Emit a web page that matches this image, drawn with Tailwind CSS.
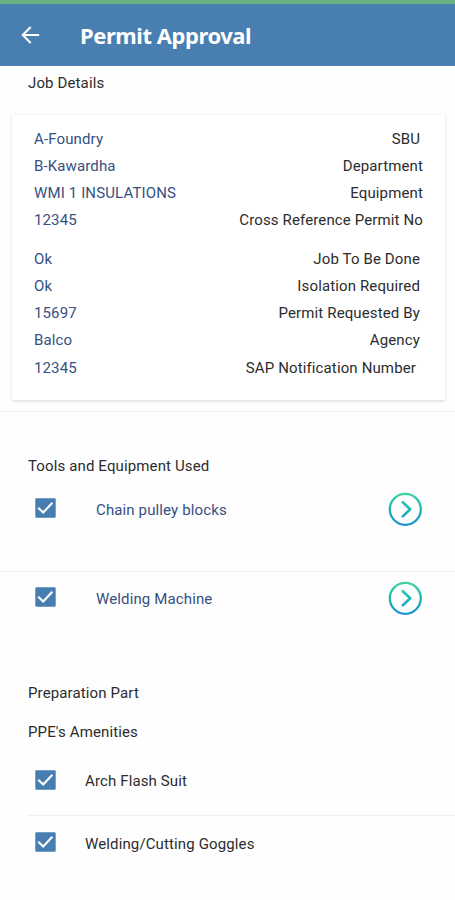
<!DOCTYPE html>
<html lang="en">
<head>
    <meta charset="UTF-8">
    <meta name="viewport" content="width=device-width, initial-scale=1.0">
    <title>Permit Approval</title>
    <script src="https://cdn.jsdelivr.net/npm/@tailwindcss/browser@4"></script>
</head>
<body class="bg-[#fefefe] font-['Roboto',sans-serif] text-[15px] leading-[27.25px] tracking-[0.13px] text-[#2c2c2e]">
    <!-- shared icons, zero-sized so the gradient still resolves -->
    <svg class="block h-0 w-0">
        <defs>
            <linearGradient id="ring" gradientUnits="userSpaceOnUse" x1="17" y1="0" x2="17" y2="34">
                <stop offset="0" stop-color="#3fd69c"/>
                <stop offset="0.5" stop-color="#20b8b4"/>
                <stop offset="1" stop-color="#1a8fd0"/>
            </linearGradient>
            <symbol id="check" viewBox="0 0 21 20">
                <rect x="0.3" y="0.3" width="20.4" height="19.4" rx="1.2" fill="#477eb1"/>
                <path d="M3.2 9.8 L8.2 14.5 L17.4 4.8" fill="none" stroke="#fff" stroke-width="2.1"/>
            </symbol>
            <symbol id="next" viewBox="0 0 34 34">
                <circle cx="17.3" cy="17.3" r="15.5" fill="none" stroke="url(#ring)" stroke-width="2.3"/>
                <path d="M14.8 10.2 L22.2 17.3 L14.8 24.4" fill="none" stroke="url(#ring)" stroke-width="2.6" stroke-linecap="round" stroke-linejoin="round"/>
            </symbol>
        </defs>
    </svg>

    <div class="h-1 bg-[#69b183]"></div>
    <header class="flex h-[62px] items-center bg-[#497eb1] pl-[21px] text-white">
        <svg class="h-[18px] w-[19px]" viewBox="0 0 19 18" fill="none" stroke="currentColor" stroke-width="2">
            <path d="M18.2 9 H2 M9.7 1 L1.7 9 L9.7 17"/>
        </svg>
        <h1 class="ml-10 pt-[1px] font-['Noto_Sans',sans-serif] text-[22px] font-bold tracking-[-0.45px]">Permit Approval</h1>
    </header>

    <main>
        <h2 class="h-[49px] pt-1 pl-7">Job Details</h2>

        <section class="mr-[10px] ml-3 h-[285px] bg-white pt-[10.5px] pr-[22px] pl-[22px] shadow-[0_1px_3px_rgba(0,0,0,0.16)]">
            <div class="flex justify-between"><span class="text-[#36507f]">A-Foundry</span><span class="pr-[3px]">SBU</span></div>
            <div class="flex justify-between"><span class="text-[#36507f]">B-Kawardha</span><span>Department</span></div>
            <div class="flex justify-between"><span class="text-[#36507f]">WMI 1 INSULATIONS</span><span>Equipment</span></div>
            <div class="flex justify-between"><span class="text-[#36507f]">12345</span><span>Cross Reference Permit No</span></div>
            <div class="mt-[11px] flex justify-between"><span class="text-[#36507f]">Ok</span><span class="pr-[3px]">Job To Be Done</span></div>
            <div class="flex justify-between"><span class="text-[#36507f]">Ok</span><span class="pr-[3px]">Isolation Required</span></div>
            <div class="flex justify-between"><span class="text-[#36507f]">15697</span><span class="pr-[3px]">Permit Requested By</span></div>
            <div class="flex justify-between"><span class="text-[#36507f]">Balco</span><span class="pr-[3px]">Agency</span></div>
            <div class="flex justify-between"><span class="text-[#36507f]">12345</span><span class="pr-[7px]">SAP Notification Number</span></div>
        </section>

        <section class="mt-[11px] border-t border-[#f2f2f2] text-[#36507f]">
            <h2 class="pt-[41px] pl-7 text-[#2c2c2e]">Tools and Equipment Used</h2>
            <div class="flex h-[91px] items-start pt-[12px] pr-[33px] pl-[35px]">
                <svg class="mt-[6px] h-5 w-[21px]"><use href="#check"/></svg>
                <span class="mt-[5px] ml-10 flex-1">Chain pulley blocks</span>
                <svg class="h-[34px] w-[34px]"><use href="#next"/></svg>
            </div>
            <div class="flex h-[109px] items-start border-t border-[#f2f2f2] pt-[9px] pr-[33px] pl-[35px]">
                <svg class="mt-[6px] h-5 w-[21px]"><use href="#check"/></svg>
                <span class="mt-[5px] ml-10 flex-1">Welding Machine</span>
                <svg class="h-[34px] w-[34px]"><use href="#next"/></svg>
            </div>
        </section>

        <section class="pl-7">
            <h2>Preparation Part</h2>
            <h2 class="mt-[11px]">PPE's Amenities</h2>
            <div class="flex h-[69px] items-start pt-[24px] pl-[7px]">
                <svg class="h-5 w-[21px]"><use href="#check"/></svg>
                <span class="-mt-[2px] ml-[29px]">Arch Flash Suit</span>
            </div>
            <div class="flex items-start border-t border-[#f0f0f0] pt-[16px] pl-[7px]">
                <svg class="h-5 w-[21px]"><use href="#check"/></svg>
                <span class="-mt-[1px] ml-[29px]">Welding/Cutting Goggles</span>
            </div>
        </section>
    </main>
</body>
</html>
